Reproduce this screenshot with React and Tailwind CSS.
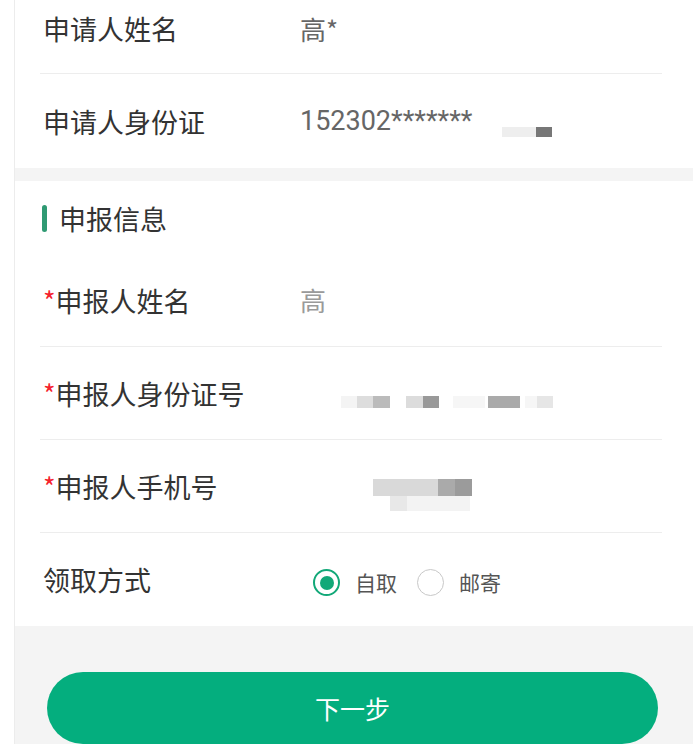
// 申报信息 form page
const FONT = { fontFamily: '"Noto Sans CJK SC", "Noto Sans", sans-serif' }
const NUM_FONT = { fontFamily: 'Roboto, "Noto Sans CJK SC", sans-serif' }

function Row({ label, required, children, last, className = 'h-[93px]' }) {
  return (
    <div className={`ml-[25px] mr-[31px] flex items-center ${last ? '' : 'border-b border-[#ededed]'} ${className}`}>
      <div className="w-[260px] pl-[3px] text-[27px] leading-none text-[#333] whitespace-nowrap">
        {required && <span className="text-[#f5222d]">*</span>}
        {label}
      </div>
      <div className="flex-1 flex items-center">{children}</div>
    </div>
  )
}

// pixelated mosaic where the personal data was masked
function Mosaic({ blocks, className }) {
  return (
    <div className={`flex ${className}`}>
      {blocks.map(([w, c], i) => (
        <div key={i} className="h-full" style={{ width: w, backgroundColor: c }} />
      ))}
    </div>
  )
}

function Radio({ checked, label }) {
  return (
    <div className="flex items-center gap-[15px]">
      {checked ? (
        <span className="w-[27px] h-[27px] rounded-full border-2 border-[#12a878] flex items-center justify-center">
          <span className="w-[14px] h-[14px] rounded-full bg-[#12a878]" />
        </span>
      ) : (
        <span className="w-[27px] h-[27px] rounded-full border-[1.5px] border-[#c8c8c8]" />
      )}
      <span className="text-[21px] leading-none text-[#555]">{label}</span>
    </div>
  )
}

export default function App() {
  return (
    <div className="w-[693px] h-[744px] overflow-hidden bg-white flex" style={FONT}>
      <div className="w-[15px] border-r border-[#ececec] bg-white shrink-0" />
      <div className="flex-1 bg-[#f4f4f4] flex flex-col">
        {/* 申请人 */}
        <div className="bg-white">
          <Row label="申请人姓名" className="h-[74px] pb-[16px]">
            <span className="text-[26px] leading-none text-[#666]">高*</span>
          </Row>
          <Row label="申请人身份证" last className="h-[94px]">
            <span className="text-[27px] leading-none text-[#666]" style={NUM_FONT}>152302*******</span>
            <Mosaic
              className="h-[10px] mt-[22px] ml-[30px]"
              blocks={[[34, '#eeeeee'], [16, '#777777']]}
            />
          </Row>
        </div>

        <div className="h-[18px]" />

        {/* 申报信息 */}
        <div className="bg-white">
          <div className="h-[73px] pt-[2px] flex items-center pl-[27px] gap-[12px]">
            <span className="w-[5px] h-[27px] rounded-full bg-[#2f9a73]" />
            <span className="text-[27px] leading-none text-[#333]">申报信息</span>
          </div>
          <Row label="申报人姓名" required>
            <span className="text-[26px] leading-none text-[#9a9a9a]">高</span>
          </Row>
          <Row label="申报人身份证号" required>
            <Mosaic
              className="h-[12px] mt-[18px] ml-[41px]"
              blocks={[
                [16, '#f4f4f4'], [16, '#dddddd'], [17, '#bbbbbb'], [16, '#ffffff'],
                [17, '#dcdcdc'], [16, '#999999'], [14, '#ffffff'], [32, '#f6f6f6'],
                [3, '#ffffff'], [32, '#aaaaaa'], [5, '#ffffff'], [12, '#f6f6f6'], [16, '#e6e6e6'],
              ]}
            />
          </Row>
          <Row label="申报人手机号" required>
            <div className="ml-[73px] mt-[18px] flex flex-col">
              <Mosaic className="h-[17px]" blocks={[[65, '#d9d9d9'], [17, '#aaaaaa'], [17, '#9b9b9b']]} />
              <Mosaic className="h-[15px] ml-[17px]" blocks={[[17, '#e8e8e8'], [63, '#f3f3f3']]} />
            </div>
          </Row>
          <Row label="领取方式" last>
            <div className="ml-[13px] mt-[6px] flex items-center gap-[20px]">
              <Radio checked label="自取" />
              <Radio label="邮寄" />
            </div>
          </Row>
        </div>

        {/* 下一步 */}
        <div className="pt-[46px] pl-[32px] pr-[35px]">
          <button className="w-full h-[72px] rounded-full bg-[#04ae7e] text-white text-[25px] leading-none">
            下一步
          </button>
        </div>
      </div>
    </div>
  )
}
